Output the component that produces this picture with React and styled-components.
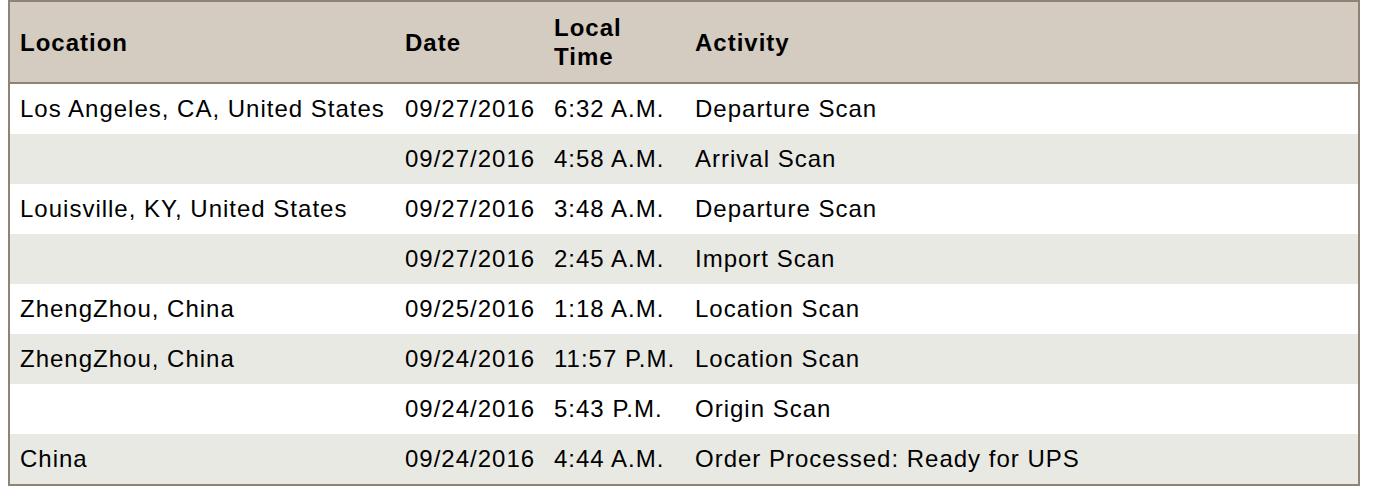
import React from 'react';
import styled, { createGlobalStyle } from 'styled-components';

const GlobalStyle = createGlobalStyle`
  body {
    margin: 0 0 0 8px;
    background: #ffffff;
    font-family: "Liberation Sans", Arial, sans-serif;
  }
`;

const Table = styled.table`
  width: 1352px;
  table-layout: fixed;
  border-collapse: collapse;
  border: 2px solid #8e8475;
  font-size: 24px;
  letter-spacing: 1px;
  color: #000;
`;

const HeadRow = styled.tr`
  background: #d4ccc1;
  border-bottom: 2px solid #8e8475;
`;

const HeadCell = styled.th`
  height: 80px;
  padding: 0 10px;
  text-align: left;
  vertical-align: middle;
  font-weight: bold;
  line-height: 29px;
  width: ${(p) => p.$w || 'auto'};
`;

const Row = styled.tr`
  background: ${(p) => (p.$alt ? '#e9e9e4' : '#ffffff')};
`;

const Cell = styled.td`
  height: 50px;
  padding: 0 10px;
  vertical-align: middle;
  white-space: nowrap;
  overflow: visible;
  line-height: 28px;
`;

const rows = [
  ['Los Angeles, CA, United States', '09/27/2016', '6:32 A.M.', 'Departure Scan'],
  ['', '09/27/2016', '4:58 A.M.', 'Arrival Scan'],
  ['Louisville, KY, United States', '09/27/2016', '3:48 A.M.', 'Departure Scan'],
  ['', '09/27/2016', '2:45 A.M.', 'Import Scan'],
  ['ZhengZhou, China', '09/25/2016', '1:18 A.M.', 'Location Scan'],
  ['ZhengZhou, China', '09/24/2016', '11:57 P.M.', 'Location Scan'],
  ['', '09/24/2016', '5:43 P.M.', 'Origin Scan'],
  ['China', '09/24/2016', '4:44 A.M.', 'Order Processed: Ready for UPS'],
];

export default function App() {
  return (
    <>
      <GlobalStyle />
      <Table>
        <thead>
          <HeadRow>
            <HeadCell $w="365px">Location</HeadCell>
            <HeadCell $w="129px">Date</HeadCell>
            <HeadCell $w="121px">
              Local
              <br />
              Time
            </HeadCell>
            <HeadCell>Activity</HeadCell>
          </HeadRow>
        </thead>
        <tbody>
          {rows.map((r, i) => (
            <Row key={i} $alt={i % 2 === 1}>
              {r.map((c, j) => (
                <Cell key={j}>{c}</Cell>
              ))}
            </Row>
          ))}
        </tbody>
      </Table>
    </>
  );
}
